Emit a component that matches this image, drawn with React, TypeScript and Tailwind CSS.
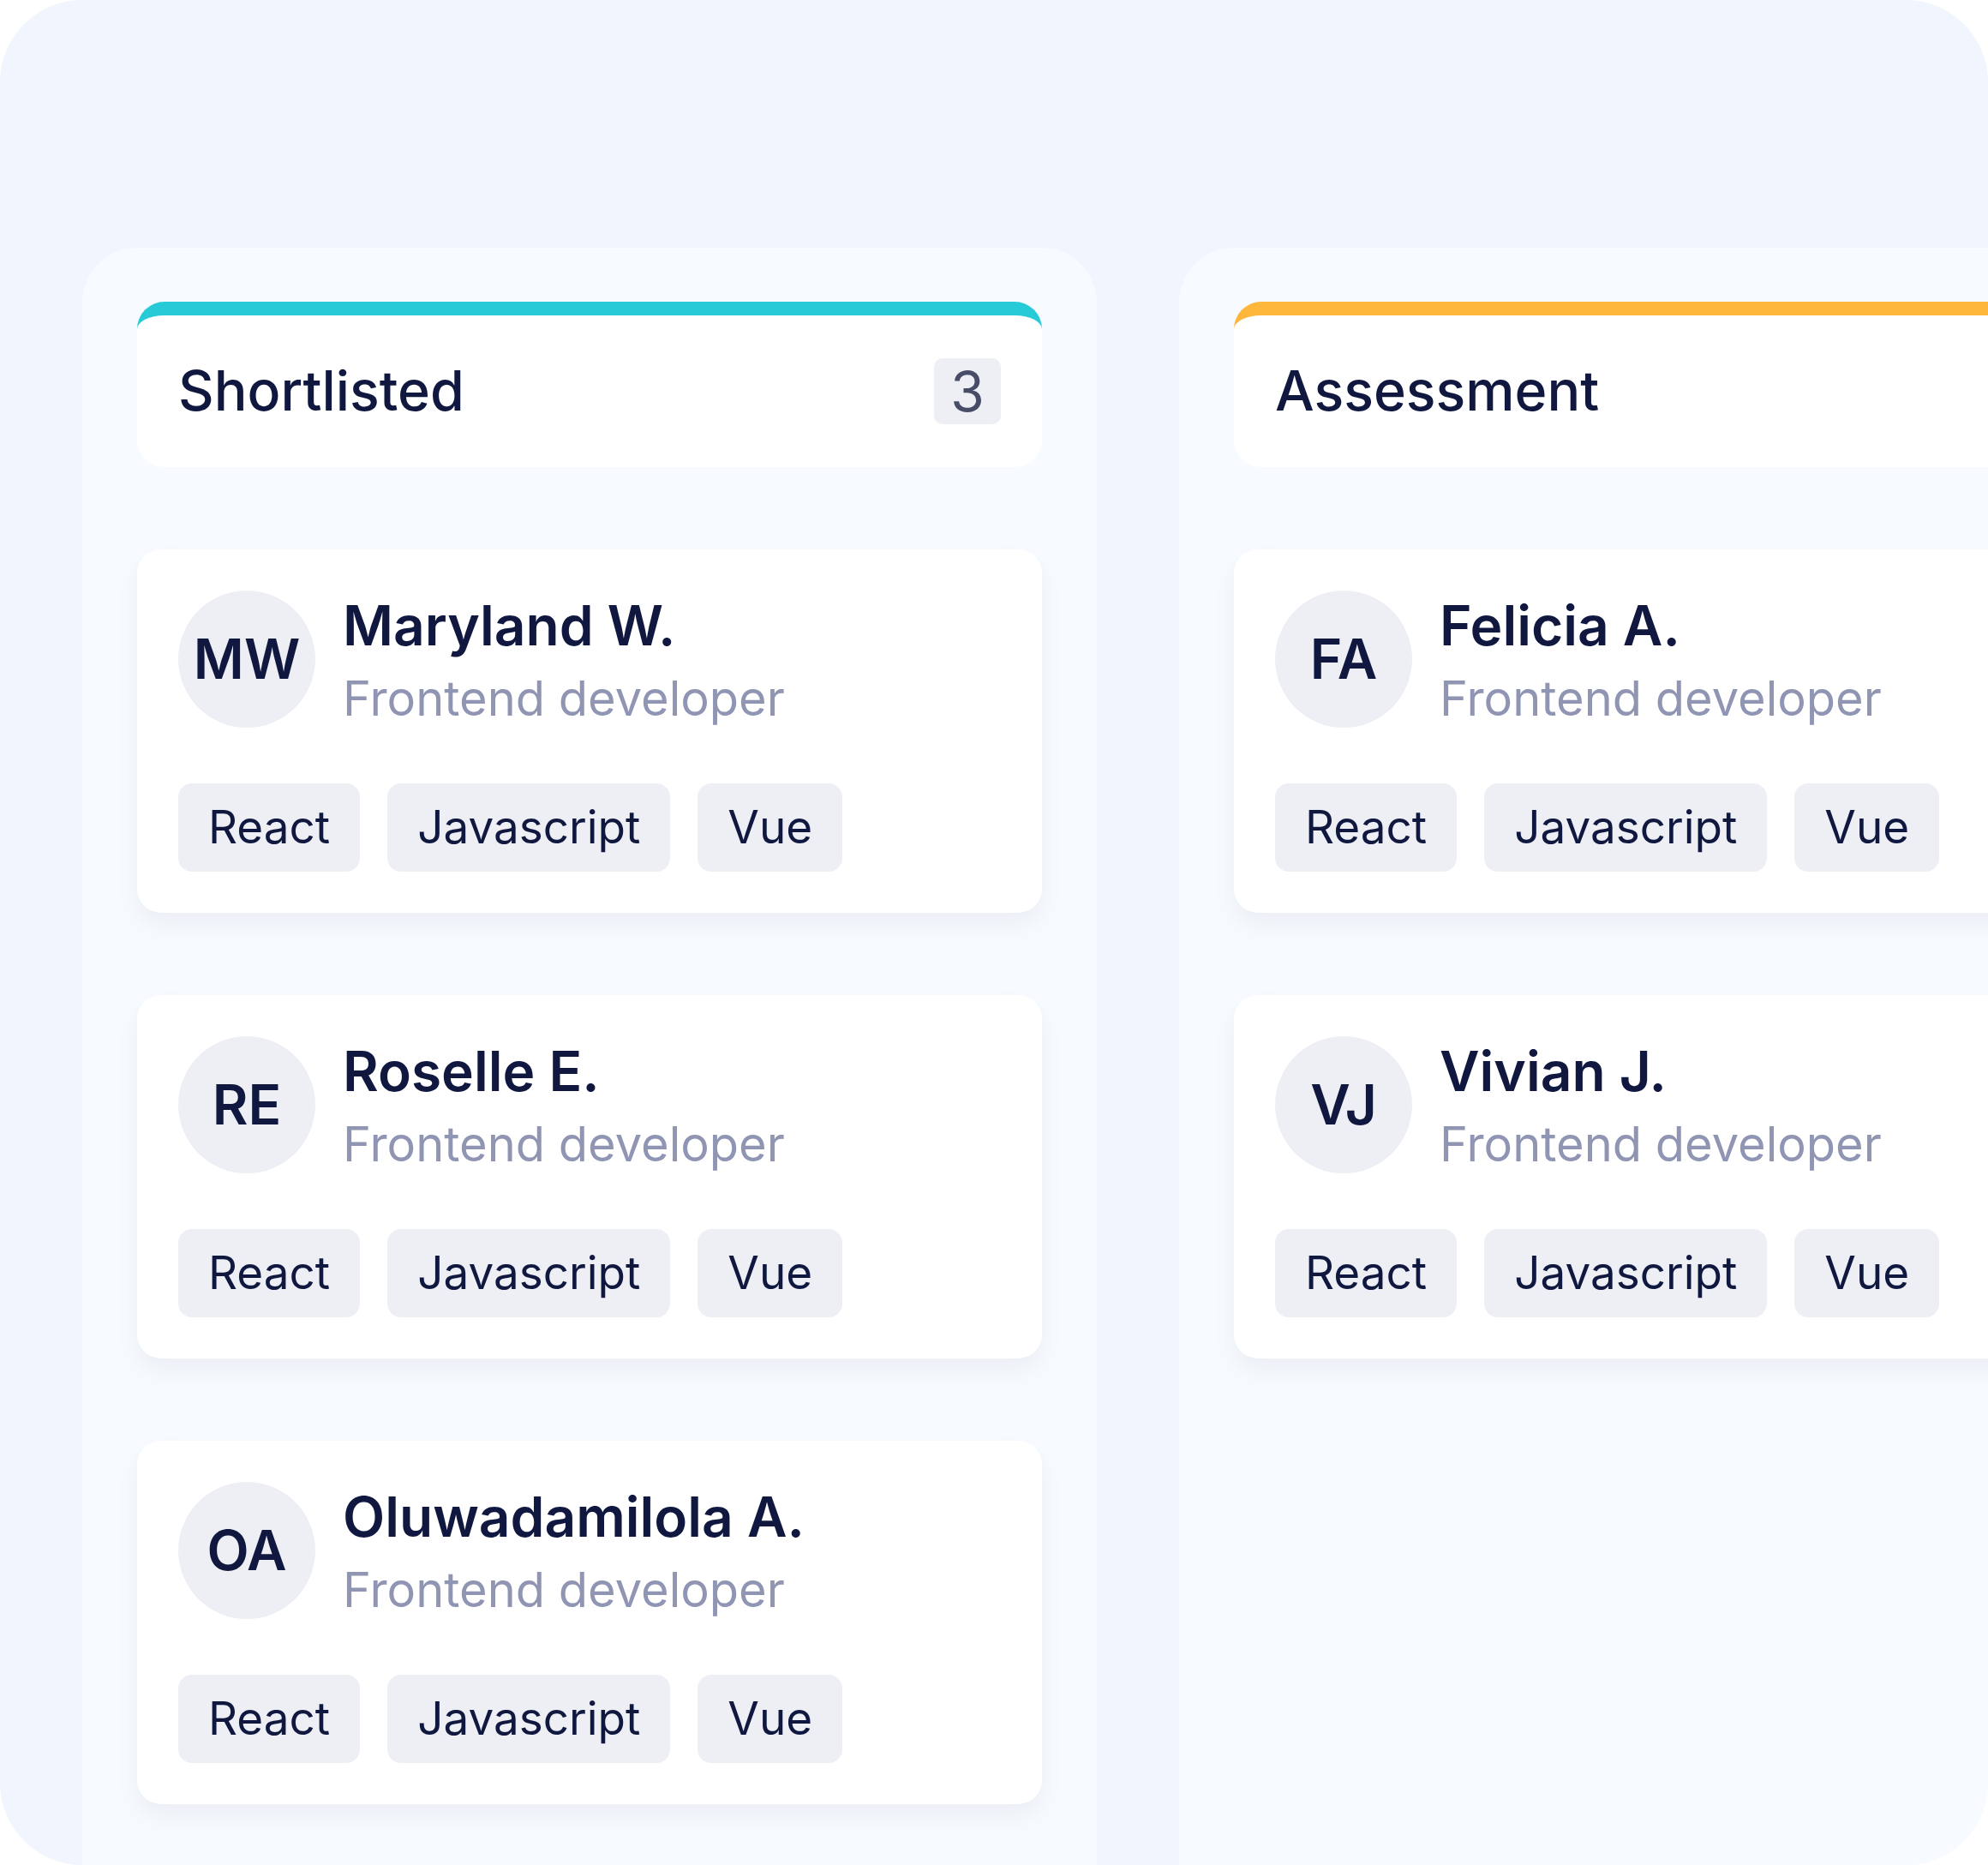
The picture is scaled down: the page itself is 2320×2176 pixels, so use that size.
import React from 'react';

interface Candidate {
  initials: string;
  name: string;
  role: string;
  skills: string[];
}

interface Stage {
  title: string;
  barColor: string;
  count?: number;
  candidates: Candidate[];
}

const skills = ['React', 'Javascript', 'Vue'];

const stages: Stage[] = [
  {
    title: 'Shortlisted',
    barColor: 'border-t-[#27CBD8]',
    count: 3,
    candidates: [
      { initials: 'MW', name: 'Maryland W.', role: 'Frontend developer', skills },
      { initials: 'RE', name: 'Roselle E.', role: 'Frontend developer', skills },
      { initials: 'OA', name: 'Oluwadamilola A.', role: 'Frontend developer', skills },
    ],
  },
  {
    title: 'Assessment',
    barColor: 'border-t-[#FFB73B]',
    candidates: [
      { initials: 'FA', name: 'Felicia A.', role: 'Frontend developer', skills },
      { initials: 'VJ', name: 'Vivian J.', role: 'Frontend developer', skills },
    ],
  },
];

function CandidateCard({ candidate }: { candidate: Candidate }) {
  return (
    <div className="rounded-[28px] bg-white p-[48px] shadow-[0_14px_28px_rgba(16,24,64,0.05)]">
      <div className="flex items-start gap-[32px]">
        <div className="flex h-[160px] w-[160px] shrink-0 items-center justify-center rounded-full bg-[#EDEFF5] text-[64px] font-semibold text-[#101840]">
          {candidate.initials}
        </div>
        <div className="mt-[3px] flex flex-col">
          <span className="text-[64px] font-semibold leading-[76px] text-[#101840]">{candidate.name}</span>
          <span className="mt-[6px] text-[56px] leading-[82px] text-[#8F95B2]">{candidate.role}</span>
        </div>
      </div>
      <div className="mt-[58px] flex gap-[32px]">
        {candidate.skills.map((s) => (
          <span
            key={s}
            className="flex h-[103px] items-center rounded-[16px] bg-[#EDEFF5] px-[35px] text-[53px] text-[#101840]"
          >
            {s}
          </span>
        ))}
      </div>
    </div>
  );
}

export default function App() {
  return (
    <div className="h-[2176px] w-[2320px] bg-white font-['Inter',sans-serif]">
      <div className="flex h-full w-full gap-[96px] overflow-hidden rounded-[96px] bg-[#F0F5FE] pl-[96px] pt-[289px]">
        {stages.map((stage) => (
          <div
            key={stage.title}
            className="flex w-[1184px] shrink-0 flex-col gap-[96px] rounded-t-[64px] bg-[#F7FAFE] px-[64px] pt-[63px]"
          >
            <div
              className={`flex h-[193px] items-center justify-between rounded-[32px] border-t-[16px] bg-white px-[48px] ${stage.barColor}`}
            >
              <span className="text-[64.5px] font-medium text-[#101840]">{stage.title}</span>
              {stage.count !== undefined && (
                <span className="flex h-[77px] w-[78px] items-center justify-center rounded-[10px] bg-[#EDEFF5] text-[64px] text-[#474D66]">
                  {stage.count}
                </span>
              )}
            </div>
            {stage.candidates.map((c) => (
              <CandidateCard key={c.initials} candidate={c} />
            ))}
          </div>
        ))}
      </div>
    </div>
  );
}
